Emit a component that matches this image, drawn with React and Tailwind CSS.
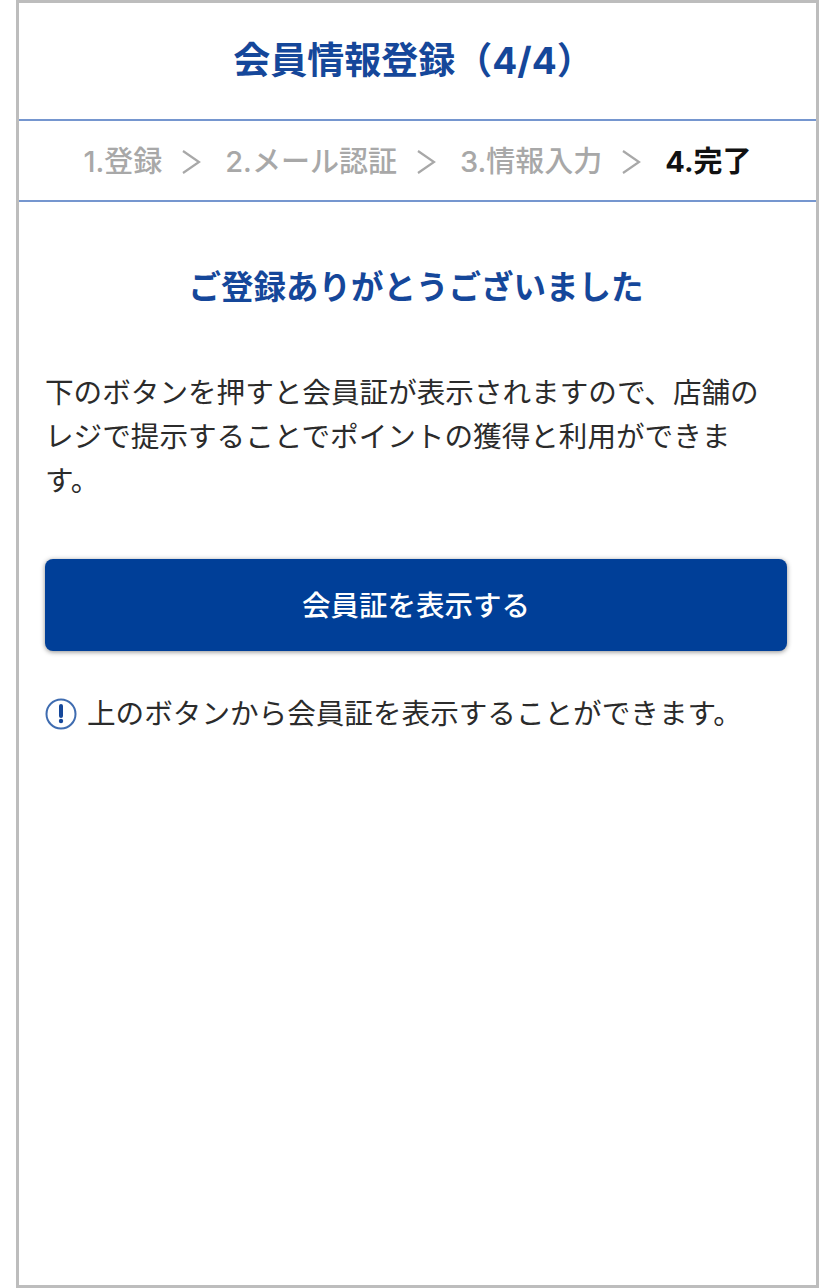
export default function App() {
  return (
    <div className="w-[838px] h-[1288px] bg-white font-['Inter','Noto_Sans_CJK_JP',sans-serif]">
      <div className="ml-[16px] mr-[19px] h-full border-x-[3px] border-y-[3px] border-[#bdbdbd] flex flex-col">
        <h1 className="h-[116px] pr-[8px] flex items-center justify-center text-[37px] font-bold text-[#15479a]">会員情報登録（4/4）</h1>
        <div className="h-[83px] pt-[2px] border-y-2 border-[#7596cf] flex items-center justify-center text-[29px] font-medium text-[#a8a8a8]">
          <span>1.登録</span>
          <Chevron />
          <span>2.メール認証</span>
          <Chevron />
          <span>3.情報入力</span>
          <Chevron />
          <span className="font-bold text-[#111]">4.完了</span>
        </div>
        <div className="pl-[26px] pr-[29px]">
          <h2 className="mt-[62px] text-center text-[32.5px] font-bold text-[#15479a]">ご登録ありがとうございました</h2>
          <p className="mt-[58px] pr-[10px] text-[28.6px] leading-[44px] text-[#2b2b2b]">
            下のボタンを押すと会員証が表示されますので、店舗のレジで提示することでポイントの獲得と利用ができます。
          </p>
          <button className="mt-[56px] w-full h-[92px] pt-[3px] rounded-lg bg-[#003f98] shadow-[0_1px_5px_rgba(0,0,0,0.45)] text-white text-[28.5px] font-medium">会員証を表示する</button>
          <div className="mt-[42px] flex items-center gap-[10px] text-[28.6px] text-[#2b2b2b]">
            <svg width="32" height="32" viewBox="0 0 32 32" fill="none" className="shrink-0">
              <circle cx="16" cy="16" r="14.5" stroke="#3f6cb0" strokeWidth="2" />
              <path d="M16 8v10" stroke="#15479a" strokeWidth="4" strokeLinecap="round" />
              <circle cx="16" cy="23" r="2.2" fill="#15479a" />
            </svg>
            <span>上のボタンから会員証を表示することができます。</span>
          </div>
        </div>
      </div>
    </div>
  )
}

function Chevron() {
  return (
    <svg width="20" height="28" viewBox="0 0 20 28" fill="none" stroke="#a8a8a8" strokeWidth="2.2" className="ml-[19px] mr-[24px]">
      <path d="M2 3l16 11L2 25" />
    </svg>
  )
}
